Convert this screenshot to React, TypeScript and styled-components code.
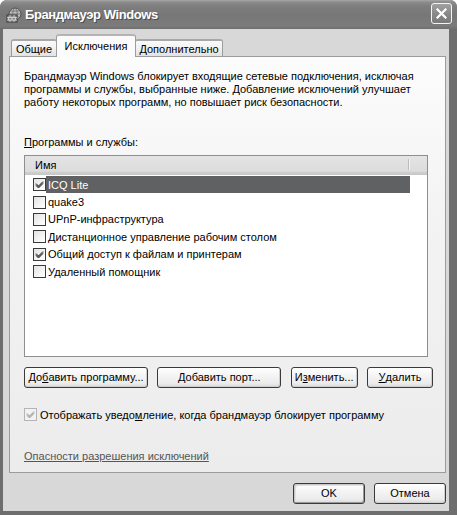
import React from 'react';
import styled, { createGlobalStyle } from 'styled-components';

const Global = createGlobalStyle`
  html, body { margin: 0; padding: 0; background: #ffffff; }
  body { font-family: "Liberation Sans", Arial, sans-serif; font-size: 11px; color: #000; }
  * { box-sizing: border-box; }
`;

const Window = styled.div`
  width: 457px;
  height: 515px;
  display: flex;
  flex-direction: column;
  background: #6e6e6e;
  border-radius: 7px 7px 0 0;
  overflow: hidden;
`;

const TitleBar = styled.div`
  height: 29px;
  flex: none;
  display: flex;
  align-items: center;
  padding: 0 5px 0 6px;
  background: linear-gradient(to bottom, #a8a8a8 0px, #8c8c8c 2px, #7e7e7e 6px, #777777 50%, #7b7b7b 88%, #707070 100%);
`;

const TitleText = styled.div`
  flex: 1;
  margin-left: 3px;
  color: #ffffff;
  font-weight: bold;
  font-size: 13px;
  letter-spacing: -0.4px;
  text-shadow: 1px 1px 0 #4c4c4c;
`;

const CloseButton = styled.div`
  width: 21px;
  height: 21px;
  border: 1px solid #f4f4f4;
  border-radius: 3px;
  background: linear-gradient(to bottom, #a0a0a0, #858585 60%, #7a7a7a);
  display: flex;
  align-items: center;
  justify-content: center;
  margin-top: -3px;
`;

const Client = styled.div`
  flex: 1;
  margin: 0 8px 4px 3px;
  background: #d8d8d8;
  display: flex;
  flex-direction: column;
  padding: 6px 3px 0 6px;
`;

const TabStrip = styled.div`
  display: flex;
  align-items: flex-end;
  height: 22px;
  padding-left: 2px;
  position: relative;
  z-index: 1;
  margin-bottom: -1px;
`;

const Tab = styled.div<{ $active?: boolean; $w: number }>`
  width: ${p => p.$w}px;
  height: ${p => (p.$active ? 23 : 18)}px;
  margin-left: ${p => (p.$active ? -1 : 0)}px;
  margin-right: ${p => (p.$active ? -1 : 0)}px;
  position: relative;
  z-index: ${p => (p.$active ? 2 : 1)};
  border: 1px solid #9c9c9c;
  border-bottom: ${p => (p.$active ? 'none' : '1px solid #9c9c9c')};
  border-radius: 3px 3px 0 0;
  border-top: 2px solid ${p => (p.$active ? '#b4b4b4' : '#a8a8a8')};
  background: ${p => (p.$active ? '#fbfbfb' : 'linear-gradient(to bottom, #fbfbfb, #eeeeee 60%, #e2e2e2)')};
  display: flex;
  align-items: ${p => (p.$active ? 'flex-start' : 'center')};
  padding-top: ${p => (p.$active ? 4 : 0)}px;
  justify-content: center;
  white-space: nowrap;
`;

const Panel = styled.div`
  height: 417px;
  flex: none;
  border: 1px solid #9c9c9c;
  background: linear-gradient(to bottom, #fcfcfc, #f3f3f3 40%, #ececec);
  padding: 13px 12px 0 14px;
  display: flex;
  flex-direction: column;
`;

const Paragraph = styled.div`
  line-height: 13px;
  width: 400px;
`;

const Label = styled.div`
  margin-top: 27px;
  line-height: 13px;
`;

const Key = styled.span`
  text-decoration: underline;
`;

const ListView = styled.div`
  margin-top: 6px;
  margin-right: 5px;
  height: 202px;
  border: 1px solid #8e8e8e;
  background: #ffffff;
  display: flex;
  flex-direction: column;
`;

const Header = styled.div`
  height: 19px;
  flex: none;
  display: flex;
  align-items: center;
  background: linear-gradient(to bottom, #e4e4e4, #dcdcdc 80%, #cfcfcf 85%, #c6c6c6);
  position: relative;
`;

const HeaderCell = styled.div`
  width: 384px;
  height: 100%;
  display: flex;
  align-items: center;
  padding-left: 10px;
  padding-bottom: 1px;
  position: relative;
  &::after {
    content: '';
    position: absolute;
    right: 0;
    top: 3px;
    bottom: 5px;
    width: 1px;
    background: #bcbcbc;
    box-shadow: 1px 0 0 #f4f4f4;
  }
`;

const Rows = styled.div`
  padding-top: 1px;
  display: flex;
  flex-direction: column;
`;

const Row = styled.div`
  height: 17.4px;
  display: flex;
  align-items: center;
  padding-left: 8px;
`;

const RowText = styled.div<{ $selected?: boolean }>`
  width: 364px;
  height: 17px;
  display: flex;
  align-items: center;
  padding-left: 2px;
  white-space: nowrap;
  background: ${p => (p.$selected ? '#606163' : 'transparent')};
  color: ${p => (p.$selected ? '#ffffff' : '#000000')};
`;

const Box = styled.div<{ $disabled?: boolean }>`
  width: 13px;
  height: 13px;
  flex: none;
  border: 1px solid ${p => (p.$disabled ? '#b4b4b4' : '#3a3a3a')};
  background: ${p => (p.$disabled ? '#f2f2f2' : 'linear-gradient(135deg, #e2e2e2, #f8f8f8 70%, #ffffff)')};
  display: flex;
  align-items: center;
  justify-content: center;
`;

const ButtonRow = styled.div`
  margin-top: 10px;
  display: flex;
  justify-content: space-between;
`;

const Button = styled.div<{ $w: number; $default?: boolean }>`
  width: ${p => p.$w}px;
  height: 21px;
  border: 1px solid #3a3a3a;
  border-radius: 3px;
  background: linear-gradient(to bottom, #ffffff, #f4f4f4 40%, #ececec 80%, #d9d9d9);
  box-shadow: ${p => (p.$default ? 'inset 1px 1px 0 #c8c8c8, inset -1px -1px 0 #9a9a9a, inset 2px 2px 0 #e0e0e0' : 'inset -1px -1px 0 #cfcfcf')};
  display: flex;
  align-items: center;
  justify-content: center;
  white-space: nowrap;
  padding-bottom: 1px;
`;

const CheckRow = styled.div`
  margin-top: 20px;
  display: flex;
  align-items: center;
  gap: 3px;
  height: 13px;
`;

const Link = styled.div`
  margin-top: 29px;
  color: #555555;
  text-decoration: underline;
  line-height: 13px;
`;

const Footer = styled.div`
  margin-top: 10px;
  display: flex;
  justify-content: flex-end;
  gap: 9px;
`;

const Check = ({ color }: { color: string }) => (
  <svg width="9" height="9" viewBox="0 0 9 9">
    <path d="M1 3.5 L3.5 6 L8 1.5 M1 4.5 L3.5 7 L8 2.5 M1 5.5 L3.5 8 L8 3.5" stroke={color} strokeWidth="1" fill="none" />
  </svg>
);

const CheckBox = ({ checked, disabled }: { checked?: boolean; disabled?: boolean }) => (
  <Box $disabled={disabled}>{checked && <Check color={disabled ? '#a0a0a0' : '#2a2a2a'} />}</Box>
);

const FirewallIcon = () => (
  <svg width="16" height="16" viewBox="0 0 16 16">
    <circle cx="9" cy="7" r="6" fill="#bdbdbd" stroke="#505050" strokeWidth="1" />
    <path d="M9 1 C6 3 6 11 9 13 M9 1 C12 3 12 11 9 13 M3 7 H15 M4 4 H14 M4 10 H14" stroke="#6a6a6a" strokeWidth="0.8" fill="none" />
    <rect x="1" y="8" width="10" height="7" fill="#8a8a8a" stroke="#3c3c3c" strokeWidth="1" />
    <path d="M1 10.5 H11 M1 13 H11 M4 8 V10.5 M8 8 V10.5 M2.5 10.5 V13 M6 10.5 V13 M9.5 10.5 V13 M4 13 V15 M8 13 V15" stroke="#dcdcdc" strokeWidth="0.8" />
  </svg>
);

const CloseIcon = () => (
  <svg width="11" height="11" viewBox="0 0 11 11">
    <path d="M1.5 1.5 L9.5 9.5 M9.5 1.5 L1.5 9.5" stroke="#ffffff" strokeWidth="2.2" strokeLinecap="square" />
  </svg>
);

const items = [
  { name: 'ICQ Lite', checked: true, selected: true },
  { name: 'quake3', checked: false },
  { name: 'UPnP-инфраструктура', checked: false },
  { name: 'Дистанционное управление рабочим столом', checked: false },
  { name: 'Общий доступ к файлам и принтерам', checked: true },
  { name: 'Удаленный помощник', checked: false },
];

export default function App() {
  return (
    <>
      <Global />
      <Window>
        <TitleBar>
          <FirewallIcon />
          <TitleText>Брандмауэр Windows</TitleText>
          <CloseButton>
            <CloseIcon />
          </CloseButton>
        </TitleBar>
        <Client>
          <TabStrip>
            <Tab $w={46}>Общие</Tab>
            <Tab $w={80} $active>Исключения</Tab>
            <Tab $w={88}>Дополнительно</Tab>
          </TabStrip>
          <Panel>
            <Paragraph>
              Брандмауэр Windows блокирует входящие сетевые подключения, исключая программы и службы, выбранные ниже. Добавление исключений улучшает работу некоторых программ, но повышает риск безопасности.
            </Paragraph>
            <Label>
              <Key>П</Key>рограммы и службы:
            </Label>
            <ListView>
              <Header>
                <HeaderCell>Имя</HeaderCell>
              </Header>
              <Rows>
                {items.map(it => (
                  <Row key={it.name}>
                    <CheckBox checked={it.checked} />
                    <RowText $selected={it.selected}>{it.name}</RowText>
                  </Row>
                ))}
              </Rows>
            </ListView>
            <ButtonRow>
              <Button $w={124}>
                До<Key>б</Key>авить программу...
              </Button>
              <Button $w={124}>
                <Key>Д</Key>обавить порт...
              </Button>
              <Button $w={67}>
                И<Key>з</Key>менить...
              </Button>
              <Button $w={66}>
                <Key>У</Key>далить
              </Button>
            </ButtonRow>
            <CheckRow>
              <CheckBox checked disabled />
              <span>
                Отображать уведо<Key>м</Key>ление, когда брандмауэр блокирует программу
              </span>
            </CheckRow>
            <Link>Опасности разрешения исключений</Link>
          </Panel>
          <Footer>
            <Button $w={72} $default>
              OK
            </Button>
            <Button $w={72}>Отмена</Button>
          </Footer>
        </Client>
      </Window>
    </>
  );
}
